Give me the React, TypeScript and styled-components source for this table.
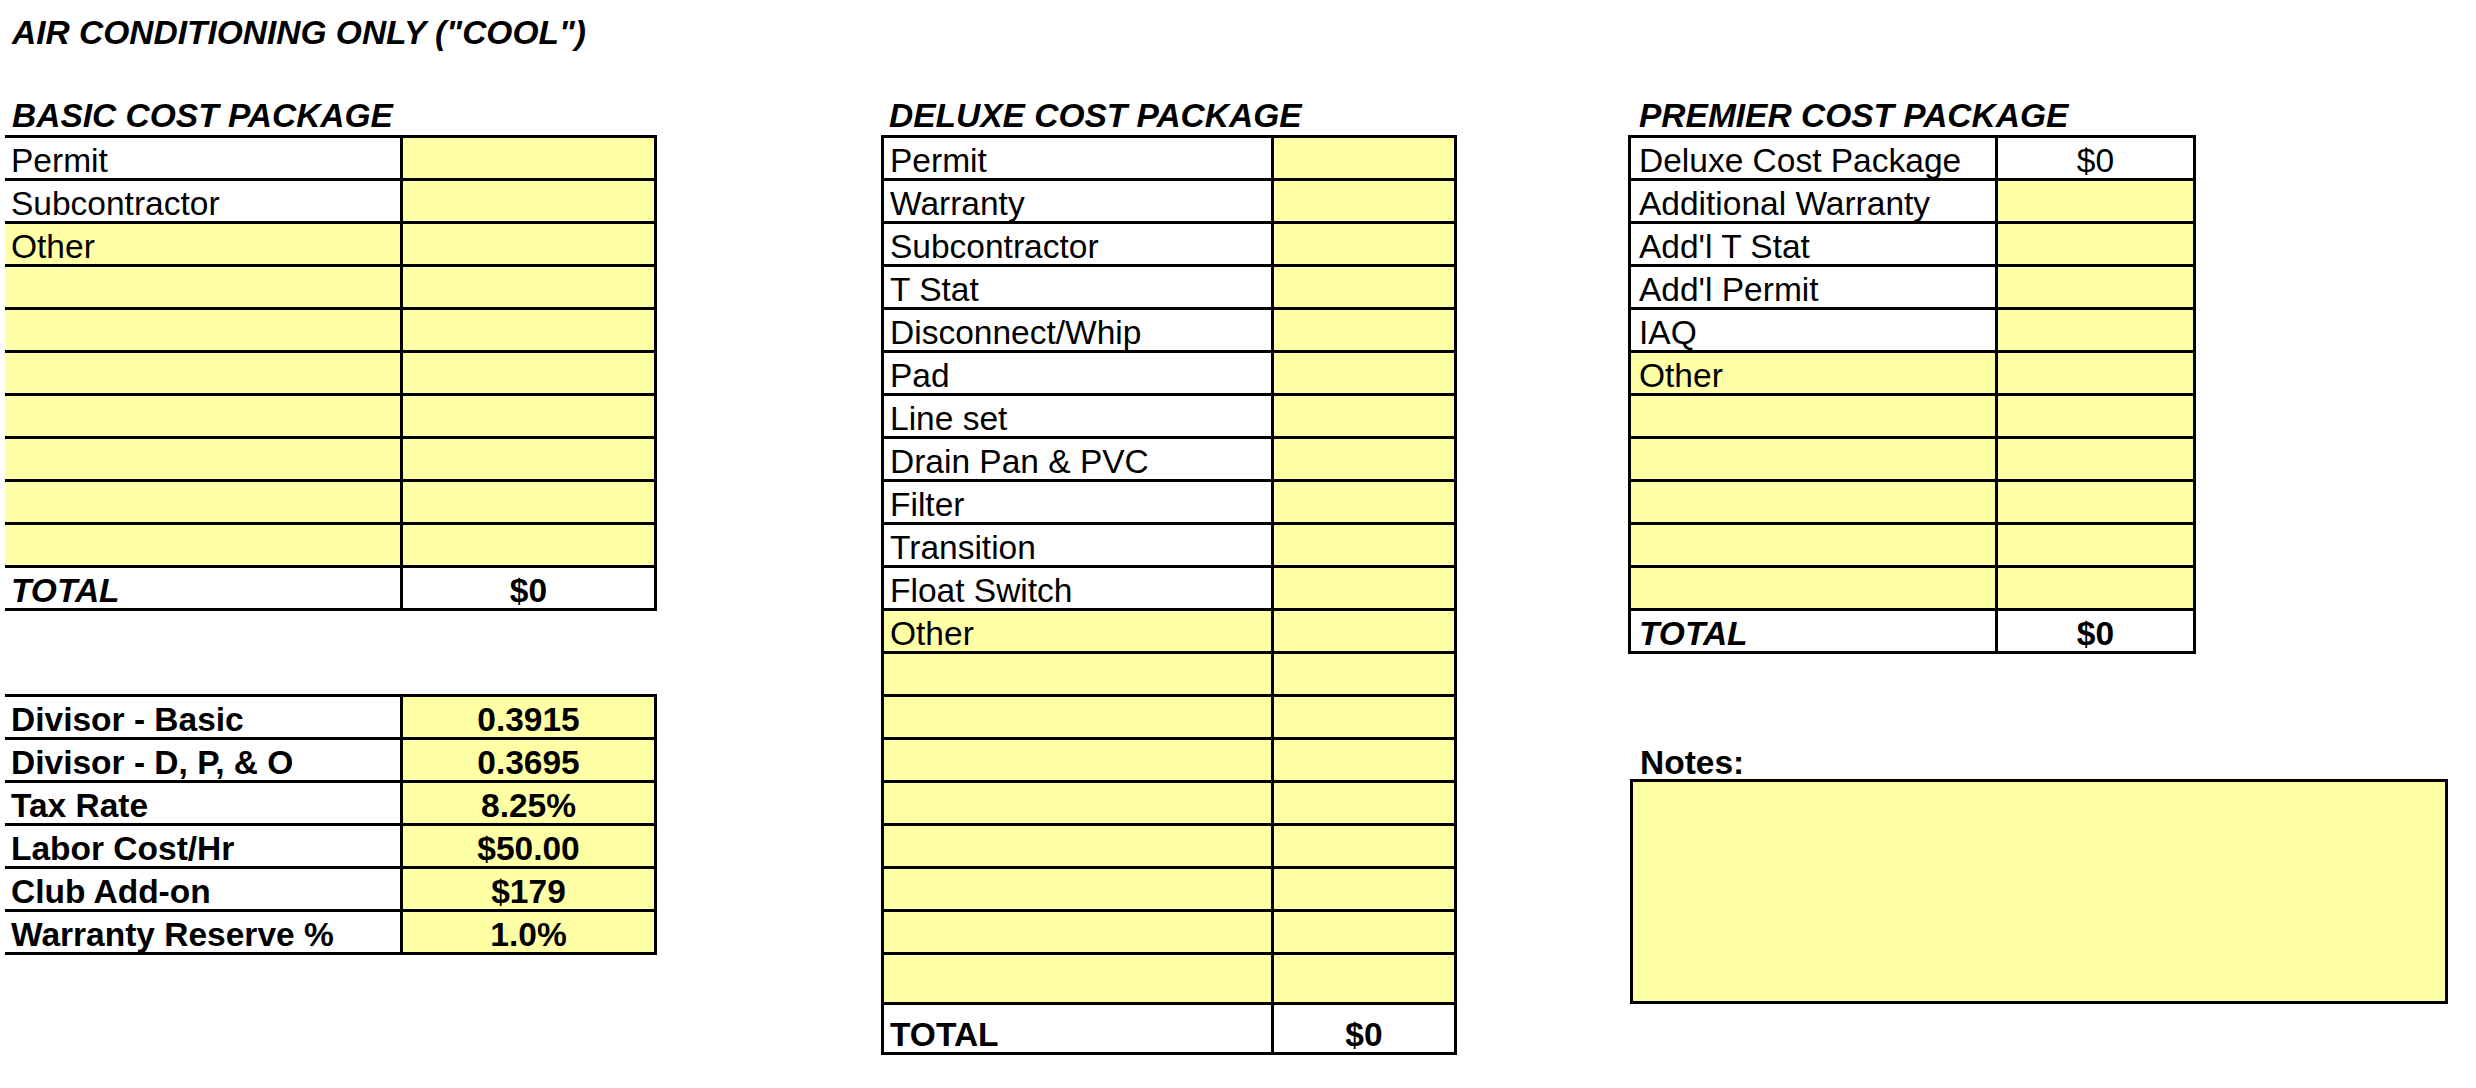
import React from "react";
import styled, { createGlobalStyle } from "styled-components";

const YELLOW = "#ffffa6";
const LINE = "3px solid #000";
const FONT_SIZE = "33.5px";

const GlobalStyle = createGlobalStyle`
  html, body { margin: 0; padding: 0; background: #ffffff; }
  body { font-family: "Liberation Sans", Arial, Helvetica, sans-serif; color: #000; }
  * { box-sizing: border-box; }
`;

const Sheet = styled.main`
  width: 2476px;
  height: 1088px;
  padding: 14px 0 0 5px;
  overflow: hidden;
`;

const Title = styled.h1`
  margin: 0;
  padding-left: 7px;
  font-size: ${FONT_SIZE};
  line-height: 38px;
  font-weight: 700;
  font-style: italic;
`;

const Columns = styled.div`
  display: flex;
  align-items: flex-start;
  margin-top: 45px;
`;

const Column = styled.section<{ $width: number; $offset?: number }>`
  flex: 0 0 ${(p) => p.$width}px;
  margin-left: ${(p) => p.$offset ?? 0}px;
  display: flex;
  flex-direction: column;
`;

const Heading = styled.h2<{ $pad: number }>`
  margin: 0;
  padding-left: ${(p) => p.$pad}px;
  font-size: ${FONT_SIZE};
  line-height: 38px;
  font-weight: 700;
  font-style: italic;
  white-space: nowrap;
`;

const Table = styled.div<{
  $width: number;
  $labelW: number;
  $pad: number;
  $leftBorder?: boolean;
  $gap?: number;
}>`
  width: ${(p) => p.$width}px;
  margin-top: ${(p) => p.$gap ?? 0}px;
  border-top: ${LINE};
  border-right: ${LINE};
  border-left: ${(p) => (p.$leftBorder ? LINE : "none")};
  --label-w: ${(p) => p.$labelW}px;
  --pad: ${(p) => p.$pad}px;
`;

const Row = styled.div<{ $tall?: boolean }>`
  display: flex;
  height: ${(p) => (p.$tall ? 50 : 43)}px;
  border-bottom: ${LINE};
  font-size: ${FONT_SIZE};
  line-height: 35px;
`;

const Label = styled.div<{ $fill?: boolean; $bold?: boolean; $italic?: boolean }>`
  flex: 0 0 var(--label-w);
  display: flex;
  align-items: flex-end;
  padding-left: var(--pad);
  background: ${(p) => (p.$fill ? YELLOW : "#ffffff")};
  font-weight: ${(p) => (p.$bold ? 700 : 400)};
  font-style: ${(p) => (p.$italic ? "italic" : "normal")};
  white-space: nowrap;
  overflow: hidden;
`;

const Value = styled.div<{ $fill?: boolean; $bold?: boolean }>`
  flex: 1 1 auto;
  display: flex;
  align-items: flex-end;
  justify-content: center;
  border-left: ${LINE};
  background: ${(p) => (p.$fill ? YELLOW : "#ffffff")};
  font-weight: ${(p) => (p.$bold ? 700 : 400)};
  white-space: nowrap;
`;

const NotesLabel = styled.div`
  margin-top: 92px;
  padding-left: 12px;
  font-size: ${FONT_SIZE};
  line-height: 33px;
  font-weight: 700;
`;

const NotesBox = styled.div`
  margin-left: 2px;
  width: 818px;
  height: 225px;
  border: ${LINE};
  background: ${YELLOW};
`;

type RowData = {
  label?: string;
  value?: string;
  labelFill?: boolean;
  valueFill?: boolean;
  bold?: boolean;
  italic?: boolean;
  valueBold?: boolean;
  tall?: boolean;
};

const item = (label: string): RowData => ({ label, labelFill: false, valueFill: true });
const blank = (n: number): RowData[] =>
  Array.from({ length: n }, () => ({ label: "", labelFill: true, valueFill: true }));

const basicRows: RowData[] = [
  item("Permit"),
  item("Subcontractor"),
  { label: "Other", labelFill: true, valueFill: true },
  ...blank(7),
  { label: "TOTAL", value: "$0", bold: true, italic: true, valueBold: true },
];

const divisorRows: RowData[] = [
  ["Divisor - Basic", "0.3915"],
  ["Divisor - D, P, & O", "0.3695"],
  ["Tax Rate", "8.25%"],
  ["Labor Cost/Hr", "$50.00"],
  ["Club Add-on", "$179"],
  ["Warranty Reserve %", "1.0%"],
].map(([label, value]) => ({ label, value, bold: true, valueBold: true, valueFill: true }));

const deluxeRows: RowData[] = [
  ...[
    "Permit",
    "Warranty",
    "Subcontractor",
    "T Stat",
    "Disconnect/Whip",
    "Pad",
    "Line set",
    "Drain Pan & PVC",
    "Filter",
    "Transition",
    "Float Switch",
  ].map(item),
  { label: "Other", labelFill: true, valueFill: true },
  ...blank(7),
  { label: "", labelFill: true, valueFill: true, tall: true },
  { label: "TOTAL", value: "$0", bold: true, valueBold: true, tall: true },
];

const premierRows: RowData[] = [
  { label: "Deluxe Cost Package", value: "$0" },
  ...["Additional Warranty", "Add'l T Stat", "Add'l Permit", "IAQ"].map(item),
  { label: "Other", labelFill: true, valueFill: true },
  ...blank(5),
  { label: "TOTAL", value: "$0", bold: true, italic: true, valueBold: true },
];

const SheetRows: React.FC<{ rows: RowData[] }> = ({ rows }) => (
  <>
    {rows.map((r, i) => (
      <Row key={i} $tall={r.tall}>
        <Label $fill={r.labelFill} $bold={r.bold} $italic={r.italic}>
          {r.label}
        </Label>
        <Value $fill={r.valueFill} $bold={r.valueBold}>
          {r.value ?? ""}
        </Value>
      </Row>
    ))}
  </>
);

export default function App() {
  return (
    <>
      <GlobalStyle />
      <Sheet>
        <Title>AIR CONDITIONING ONLY ("COOL")</Title>
        <Columns>
          <Column $width={652}>
            <Heading $pad={7}>BASIC COST PACKAGE</Heading>
            <Table $width={652} $labelW={395} $pad={6}>
              <SheetRows rows={basicRows} />
            </Table>
            <Table $width={652} $labelW={395} $pad={6} $gap={83}>
              <SheetRows rows={divisorRows} />
            </Table>
          </Column>
          <Column $width={576} $offset={224}>
            <Heading $pad={8}>DELUXE COST PACKAGE</Heading>
            <Table $width={576} $labelW={387} $pad={6} $leftBorder>
              <SheetRows rows={deluxeRows} />
            </Table>
          </Column>
          <Column $width={820} $offset={171}>
            <Heading $pad={11}>PREMIER COST PACKAGE</Heading>
            <Table $width={568} $labelW={364} $pad={8} $leftBorder>
              <SheetRows rows={premierRows} />
            </Table>
            <NotesLabel>Notes:</NotesLabel>
            <NotesBox />
          </Column>
        </Columns>
      </Sheet>
    </>
  );
}
